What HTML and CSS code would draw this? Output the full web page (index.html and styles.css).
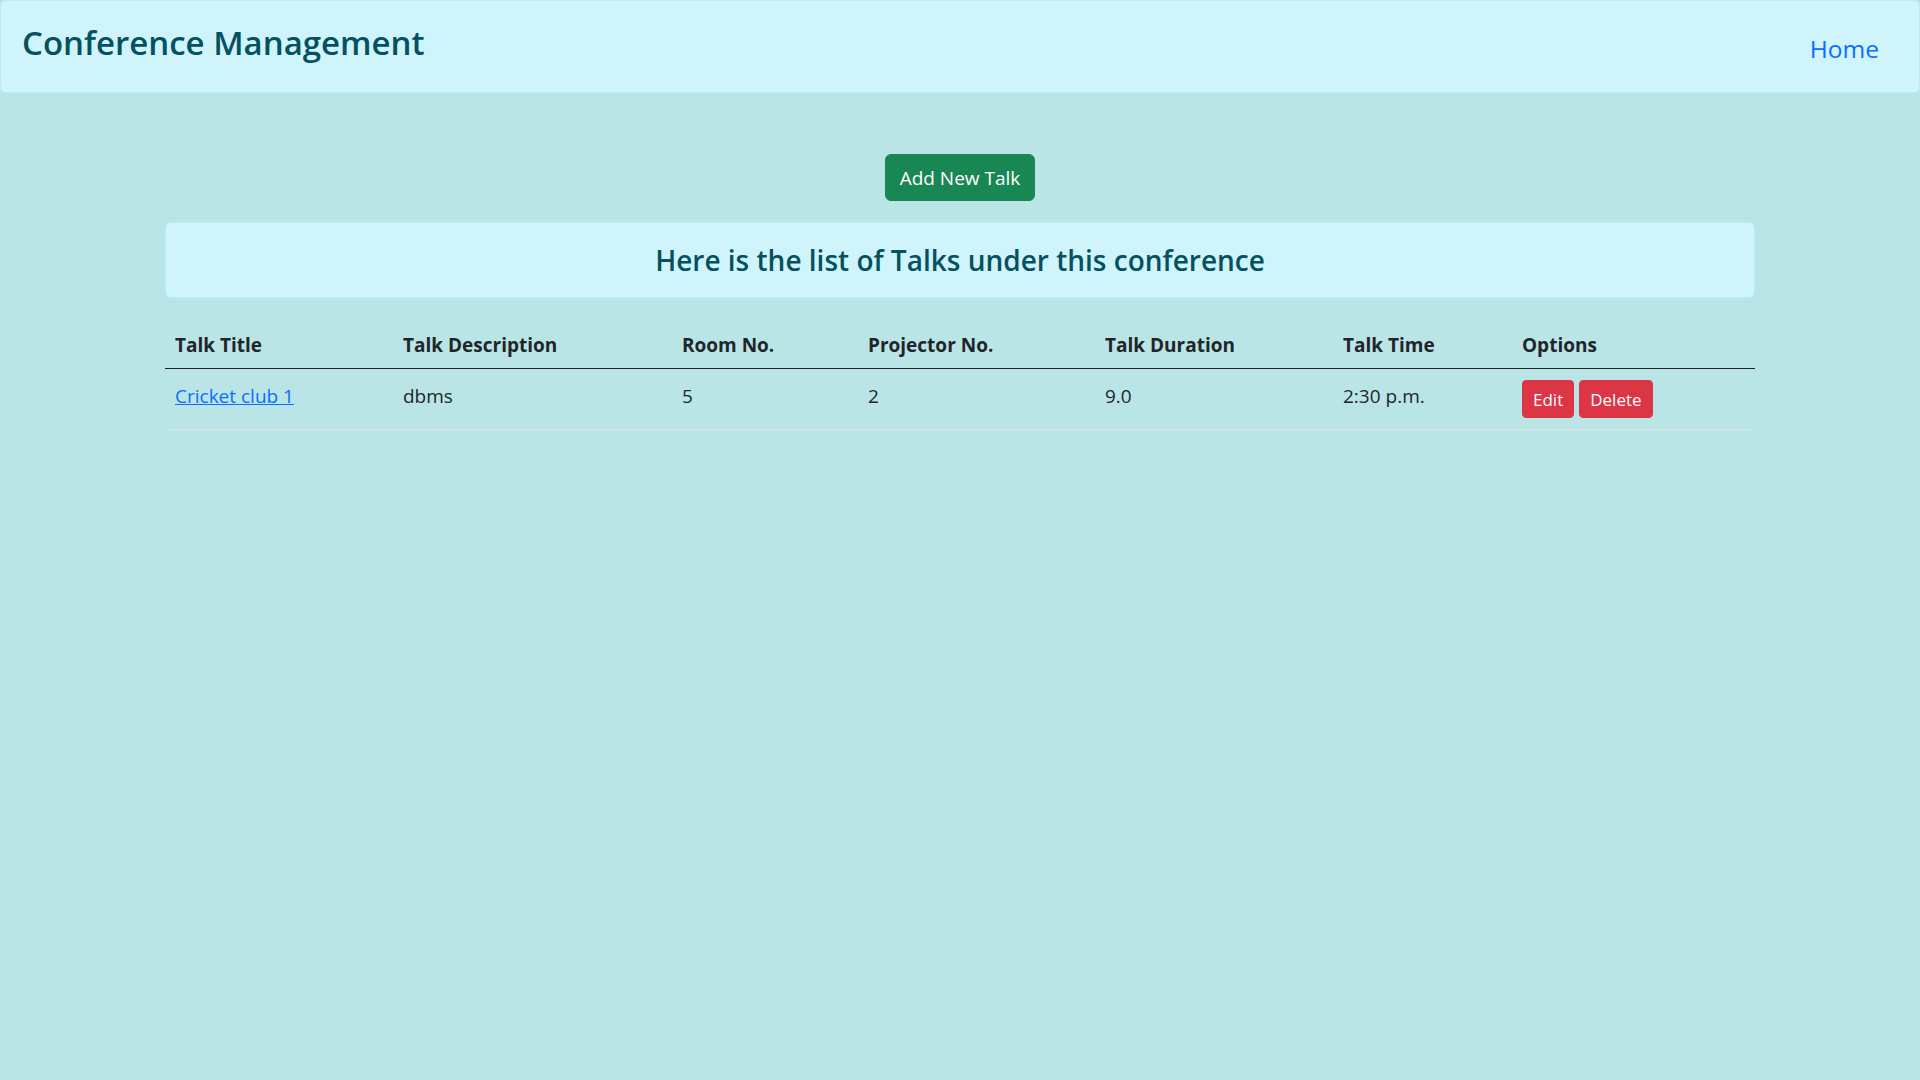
FILE: index.html
```html
<!DOCTYPE html>
<html lang="en">
<head>
<meta charset="utf-8">
<title>Conference Management</title>
<link rel="stylesheet" href="styles.css">
</head>
<body>
<nav class="navbar">
  <a class="brand" href="#">Conference Management</a>
  <a class="home" href="#">Home</a>
</nav>
<main class="container">
  <div class="actions">
    <a class="btn btn-green" href="#">Add New Talk</a>
  </div>
  <div class="banner">
    <h4 class="banner-title">Here is the list of Talks under this conference</h4>
  </div>
  <table class="talks">
    <colgroup>
      <col class="c1"><col class="c2"><col class="c3"><col class="c4"><col class="c5"><col class="c6"><col class="c7">
    </colgroup>
    <thead>
      <tr>
        <th>Talk Title</th>
        <th>Talk Description</th>
        <th>Room No.</th>
        <th>Projector No.</th>
        <th>Talk Duration</th>
        <th>Talk Time</th>
        <th>Options</th>
      </tr>
    </thead>
    <tbody>
      <tr>
        <td><a class="link" href="#">Cricket club 1</a></td>
        <td>dbms</td>
        <td>5</td>
        <td>2</td>
        <td>9.0</td>
        <td>2:30 p.m.</td>
        <td class="opts"><a class="btn btn-sm btn-red" href="#">Edit</a><a class="btn btn-sm btn-red" href="#">Delete</a></td>
      </tr>
    </tbody>
  </table>
</main>
</body>
</html>
```

FILE: styles.css
```css
* { box-sizing: border-box; }
html, body {
  margin: 0;
  padding: 0;
}
body {
  background: #b9e5e7;
  font-family: "Open Sans", "Noto Sans", sans-serif;
  font-size: 20px;
  line-height: 1.5;
  color: #212529;
  min-height: 1080px;
}
.navbar {
  height: 93px;
  background: #cff4fc;
  border: 1px solid #b6effb;
  border-radius: 6px;
  display: flex;
  align-items: center;
  justify-content: space-between;
  padding: 0 40px 0 21px;
}
.brand {
  color: #055160;
  text-decoration: none;
  font-size: 33px;
  font-weight: 600;
  line-height: 1.2;
  margin-top: -7px;
}
.home {
  color: #0d6efd;
  text-decoration: none;
  font-size: 24.5px;
  line-height: 1.2;
  margin-top: 4px;
}
.container {
  width: 1590px;
  margin: 0 auto;
}
.actions {
  display: flex;
  justify-content: center;
  padding-top: 61px;
  margin-bottom: 21px;
}
.btn {
  display: inline-block;
  text-decoration: none;
  color: #fff;
  font-size: 19px;
  line-height: 1.5;
  padding: 9px 14px 5px;
  border-radius: 6px;
  border: 1px solid transparent;
}
.btn-green { background: #198754; border-color: #198754; height: 47px; }
.btn-red { background: #dc3545; border-color: #dc3545; }
.btn-sm {
  font-size: 17px;
  padding: 6px 10px 4px;
  height: 38px;
  border-radius: 4px;
}
.banner {
  background: #cff4fc;
  border: 1px solid #b6effb;
  border-radius: 6px;
  height: 76px;
  display: flex;
  align-items: center;
  justify-content: center;
  margin-bottom: 21px;
}
.banner-title {
  margin: 2px 0 0;
  color: #055160;
  font-size: 28px;
  font-weight: 600;
  line-height: 1.2;
}
.talks {
  width: 100%;
  border-collapse: collapse;
}
.c1 { width: 228px; }
.c2 { width: 279px; }
.c3 { width: 186px; }
.c4 { width: 237px; }
.c5 { width: 238px; }
.c6 { width: 179px; }
.c7 { width: 243px; }
.talks th {
  text-align: left;
  font-weight: 700;
  font-size: 19px;
  padding: 12px 10px 8px;
  border-bottom: 1px solid #212529;
}
.talks td {
  font-size: 19px;
  padding: 13px 10px 8px;
  border-bottom: 1px solid #dee2e6;
  vertical-align: top;
}
.talks td.opts { padding-top: 11px; padding-bottom: 11px; }
.opts .btn + .btn { margin-left: 5px; }
.link { color: #0d6efd; text-decoration: underline; }
```
